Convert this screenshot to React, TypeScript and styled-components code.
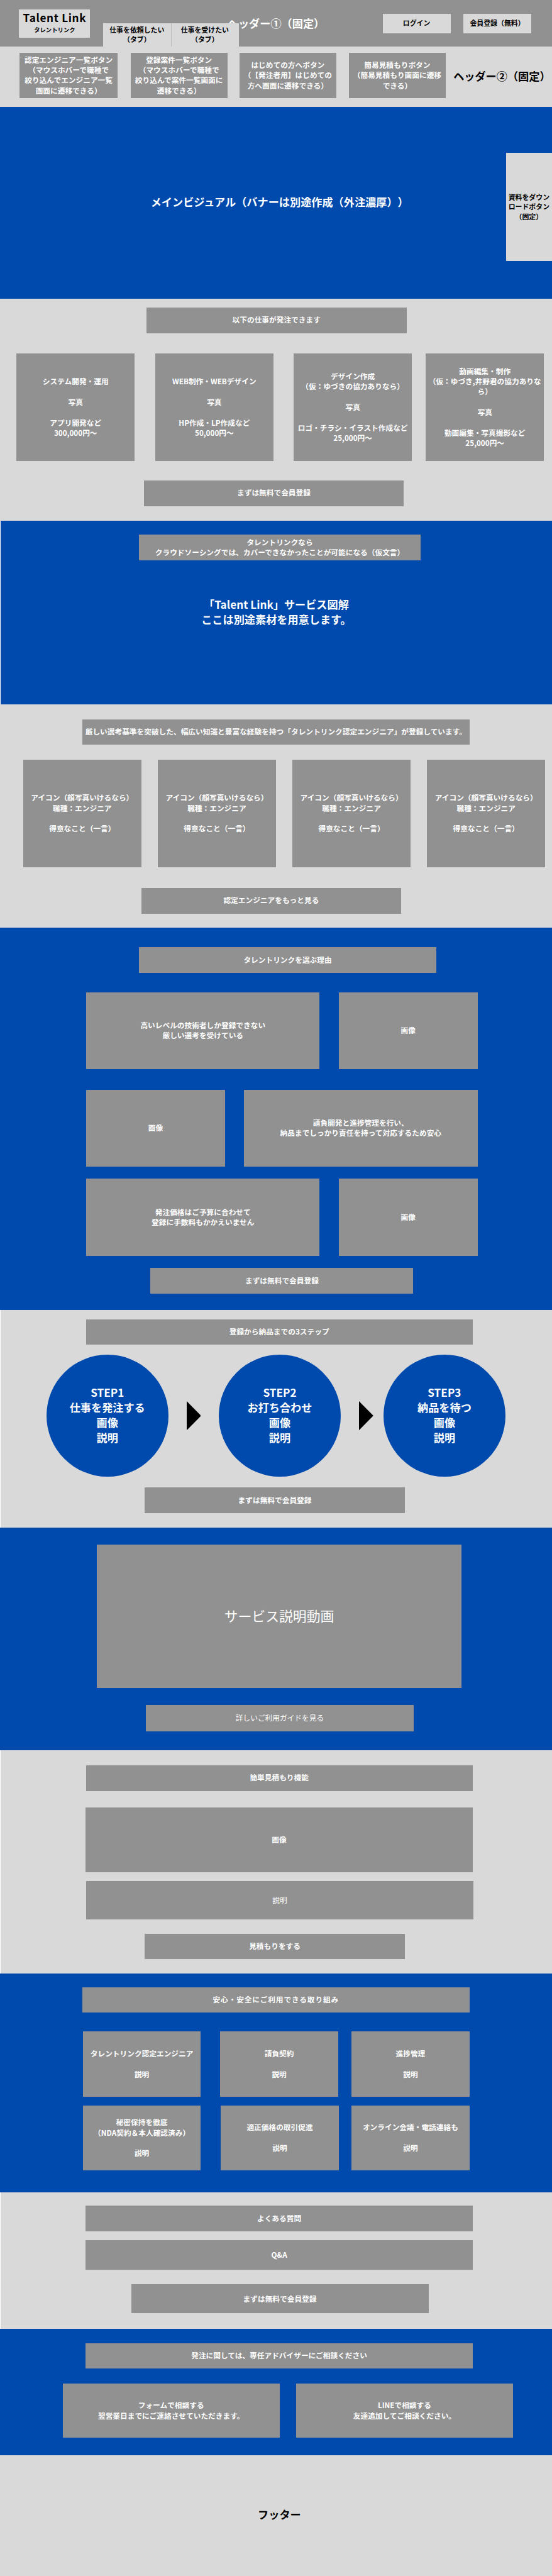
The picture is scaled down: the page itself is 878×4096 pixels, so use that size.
import React from 'react';
import styled, { createGlobalStyle, css } from 'styled-components';

/* The wireframe is laid out on a 1500-unit wide board. */
const u = (n: number) => `${(n * 0.58514).toFixed(3)}px`;

const BLUE = '#004aad';
const LIGHT = '#d9d9d9';
const GRAY = '#919191';

const GlobalStyle = createGlobalStyle`
  *, *::before, *::after { box-sizing: border-box; }
  html, body { margin: 0; padding: 0; background: #fff; }
  body {
    font-family: "Noto Sans CJK JP", "Noto Sans", sans-serif;
    font-weight: 700;
    text-spacing-trim: space-all;
    -webkit-font-smoothing: antialiased;
  }
`;

const Page = styled.div`
  width: 100%;
  overflow: hidden;
`;

const label = css`
  white-space: pre;
  text-align: center;
  font-size: ${u(20)};
  line-height: ${u(28)};
`;

const Section = styled.section<{ $tone: 'blue' | 'light'; $h: number; $edge?: boolean }>`
  display: flex;
  flex-direction: column;
  align-items: flex-start;
  position: relative;
  height: ${p => u(p.$h)};
  background: ${p => (p.$tone === 'blue' ? BLUE : LIGHT)};
  box-shadow: ${p => (p.$edge ? 'inset 1px 0 0 #fff' : 'none')};
`;

const Row = styled.div<{ $top: number; $left: number }>`
  display: flex;
  align-items: center;
  flex: none;
  margin-top: ${p => u(p.$top)};
  margin-left: ${p => u(p.$left)};
`;

const Panel = styled.div<{ $w: number; $h: number; $gap?: number; $thin?: boolean; $track?: number }>`
  ${label}
  display: flex;
  align-items: center;
  justify-content: center;
  flex: none;
  width: ${p => u(p.$w)};
  height: ${p => u(p.$h)};
  margin-left: ${p => u(p.$gap ?? 0)};
  padding-bottom: 1px;
  background: ${GRAY};
  color: #fff;
  font-weight: ${p => (p.$thin ? 400 : 700)};
  letter-spacing: ${p => u(p.$track ?? 0)};
`;

const VideoPanel = styled(Panel)`
  font-size: ${u(37.33)};
  line-height: ${u(52)};
  padding-bottom: 2px;
`;

const HeaderTop = styled.header`
  position: relative;
  display: flex;
  align-items: flex-start;
  height: ${u(127)};
  background: ${GRAY};
`;

const HeaderTitle = styled.div`
  position: absolute;
  inset: 0;
  display: flex;
  align-items: center;
  justify-content: center;
  padding-bottom: 2px;
  font-size: ${u(29.33)};
  color: #fff;
`;

const Logo = styled.div`
  display: flex;
  flex-direction: column;
  align-items: center;
  position: relative;
  width: ${u(193)};
  height: ${u(77.5)};
  margin: ${u(25)} 0 0 ${u(52)};
  padding-top: ${u(4.6)};
  background: ${LIGHT};
  color: #000;
`;

const LogoName = styled.div`
  font-size: ${u(29.33)};
  line-height: ${u(38)};
  letter-spacing: ${u(1.1)};
  white-space: nowrap;
`;

const LogoKana = styled.div`
  font-size: ${u(16)};
  line-height: ${u(26)};
  white-space: nowrap;
`;

const Tabs = styled.nav`
  display: flex;
  position: relative;
  margin: ${u(63.5)} 0 0 ${u(35)};
`;

const smallLabel = css`
  display: flex;
  align-items: center;
  justify-content: center;
  flex: none;
  background: ${LIGHT};
  color: #000;
  white-space: pre;
  text-align: center;
  font-size: ${u(18.67)};
  line-height: ${u(26)};
  padding-bottom: 1px;
`;

const Tab = styled.div`
  ${smallLabel}
  width: ${u(184.6)};
  height: ${u(63.5)};
  & + & { box-shadow: inset 1px 0 0 #bcbcbc; }
`;

const HeaderActions = styled.div`
  display: flex;
  position: relative;
  gap: ${u(35)};
  margin: ${u(37)} 0 0 ${u(391)};
`;

const ActionButton = styled.div`
  ${smallLabel}
  width: ${u(184.5)};
  height: ${u(53.5)};
`;

const HeaderBottomTitle = styled.div`
  margin-left: ${u(21)};
  padding-top: ${u(2)};
  font-size: ${u(29.33)};
  line-height: ${u(41)};
  white-space: nowrap;
  color: #000;
`;

const Banner = styled.div<{ $top: number; $center: number; $dark?: boolean }>`
  margin-top: ${p => u(p.$top)};
  width: ${p => u(p.$center * 2)};
  flex: none;
  text-align: center;
  white-space: pre;
  font-size: ${u(29.33)};
  line-height: ${u(41)};
  color: ${p => (p.$dark ? '#000' : '#fff')};
`;

const DownloadTab = styled.aside`
  ${smallLabel}
  position: absolute;
  right: 0;
  top: ${u(125.5)};
  width: ${u(125.3)};
  height: ${u(294)};
`;

const Circle = styled.div<{ $gap?: number }>`
  display: flex;
  align-items: center;
  justify-content: center;
  flex: none;
  width: ${u(331)};
  height: ${u(331.5)};
  margin-left: ${p => u(p.$gap ?? 0)};
  padding-bottom: 2px;
  border-radius: 50%;
  background: ${BLUE};
  color: #fff;
  white-space: pre;
  text-align: center;
  font-size: ${u(29.33)};
  line-height: ${u(41.2)};
`;

const ArrowIcon = styled.svg`
  display: block;
  flex: none;
  width: ${u(39)};
  height: ${u(79)};
  margin-left: ${u(49.7)};
`;

const Arrow = () => (
  <ArrowIcon viewBox="0 0 39 79" preserveAspectRatio="none">
    <polygon points="0,0 39,39.5 0,79" fill="#000" />
  </ArrowIcon>
);

const services = [
  { gap: 0, text: 'システム開発・運用\n\n写真\n\nアプリ開発など\n300,000円〜' },
  { gap: 56, text: 'WEB制作・WEBデザイン\n\n写真\n\nHP作成・LP作成など\n50,000円〜' },
  { gap: 55.5, text: 'デザイン作成\n（仮：ゆづきの協力ありなら）\n\n写真\n\nロゴ・チラシ・イラスト作成など\n25,000円〜' },
  { gap: 38, text: '動画編集・制作\n（仮：ゆづき,井野君の協力ありな\nら）\n\n写真\n\n動画編集・写真撮影など\n25,000円〜' },
];

const engineer = 'アイコン（顔写真いけるなら）\n職種：エンジニア\n\n得意なこと（一言）';

export default function App() {
  return (
    <Page>
      <GlobalStyle />

      <HeaderTop>
        <HeaderTitle>ヘッダー①（固定）</HeaderTitle>
        <Logo>
          <LogoName>Talent Link</LogoName>
          <LogoKana>タレントリンク</LogoKana>
        </Logo>
        <Tabs>
          <Tab>{'仕事を依頼したい\n（タブ）'}</Tab>
          <Tab>{'仕事を受けたい\n（タブ）'}</Tab>
        </Tabs>
        <HeaderActions>
          <ActionButton>ログイン</ActionButton>
          <ActionButton>会員登録（無料）</ActionButton>
        </HeaderActions>
      </HeaderTop>

      <Section $tone="light" $h={163.5}>
        <Row $top={16} $left={53.5}>
          <Panel $w={266} $h={124}>{'認定エンジニア一覧ボタン\n（マウスホバーで職種で\n絞り込んでエンジニア一覧\n画面に遷移できる）'}</Panel>
          <Panel $w={263} $h={124} $gap={35.5}>{'登録案件一覧ボタン\n（マウスホバーで職種で\n絞り込んで案件一覧画面に\n遷移できる）'}</Panel>
          <Panel $w={263} $h={124} $gap={33}>{'はじめての方へボタン\n（【発注者用】はじめての\n方へ画面に遷移できる）'}</Panel>
          <Panel $w={263} $h={124} $gap={34.5}>{'簡易見積もりボタン\n（簡易見積もり画面に遷移\nできる）'}</Panel>
          <HeaderBottomTitle>ヘッダー②（固定）</HeaderBottomTitle>
        </Row>
      </Section>

      <Section $tone="blue" $h={520.5}>
        <Banner $top={237} $center={760}>メインビジュアル（バナーは別途作成（外注濃厚））</Banner>
        <DownloadTab>{'資料をダウン\nロードボタン\n（固定）'}</DownloadTab>
      </Section>

      <Section $tone="light" $h={604.5}>
        <Row $top={24} $left={398}>
          <Panel $w={707} $h={70}>以下の仕事が発注できます</Panel>
        </Row>
        <Row $top={56} $left={45}>
          {services.map(s => (
            <Panel key={s.text} $w={321} $h={292} $gap={s.gap}>{s.text}</Panel>
          ))}
        </Row>
        <Row $top={52.5} $left={391}>
          <Panel $w={706.5} $h={69.5}>まずは無料で会員登録</Panel>
        </Row>
      </Section>

      <Section $tone="blue" $h={499} $edge>
        <Row $top={37.5} $left={377}>
          <Panel $w={767} $h={69.5}>{'タレントリンクなら\nクラウドソーシングでは、カバーできなかったことが可能になる（仮文言）'}</Panel>
        </Row>
        <Banner $top={100} $center={751}>{'「Talent Link」サービス図解\nここは別途素材を用意します。'}</Banner>
      </Section>

      <Section $tone="light" $h={606}>
        <Row $top={40.2} $left={224}>
          <Panel $w={1052} $h={69.5}>厳しい選考基準を突破した、幅広い知識と豊富な経験を持つ「タレントリンク認定エンジニア」が登録しています。</Panel>
        </Row>
        <Row $top={40.5} $left={63.3}>
          <Panel $w={320.5} $h={292}>{engineer}</Panel>
          <Panel $w={320.5} $h={292} $gap={45.5}>{engineer}</Panel>
          <Panel $w={320.5} $h={292} $gap={45.5}>{engineer}</Panel>
          <Panel $w={320.5} $h={292} $gap={45.5}>{engineer}</Panel>
        </Row>
        <Row $top={56} $left={384}>
          <Panel $w={706.5} $h={70}>認定エンジニアをもっと見る</Panel>
        </Row>
      </Section>

      <Section $tone="blue" $h={1039.5}>
        <Row $top={53.2} $left={378}>
          <Panel $w={808} $h={70}>タレントリンクを選ぶ理由</Panel>
        </Row>
        <Row $top={52.6} $left={234.4}>
          <Panel $w={634.4} $h={208.8}>{'高いレベルの技術者しか登録できない\n厳しい選考を受けている'}</Panel>
          <Panel $w={377} $h={208.8} $gap={52.3}>画像</Panel>
        </Row>
        <Row $top={56} $left={234.4}>
          <Panel $w={377} $h={208.8}>画像</Panel>
          <Panel $w={635} $h={208.8} $gap={51.7}>{'請負開発と進捗管理を行い、\n納品までしっかり責任を持って対応するため安心'}</Panel>
        </Row>
        <Row $top={33.3} $left={234.4}>
          <Panel $w={634.4} $h={209}>{'発注価格はご予算に合わせて\n登録に手数料もかかえいません'}</Panel>
          <Panel $w={377} $h={209} $gap={52.3}>画像</Panel>
        </Row>
        <Row $top={33} $left={409}>
          <Panel $w={714.6} $h={70}>まずは無料で会員登録</Panel>
        </Row>
      </Section>

      <Section $tone="light" $h={591} $edge>
        <Row $top={25} $left={233.4}>
          <Panel $w={1051.4} $h={69.5}>登録から納品までの3ステップ</Panel>
        </Row>
        <Row $top={27.3} $left={126.3}>
          <Circle>{'STEP1\n仕事を発注する\n画像\n説明'}</Circle>
          <Arrow />
          <Circle $gap={49}>{'STEP2\nお打ち合わせ\n画像\n説明'}</Circle>
          <Arrow />
          <Circle $gap={28}>{'STEP3\n納品を待つ\n画像\n説明'}</Circle>
        </Row>
        <Row $top={29.3} $left={393.7}>
          <Panel $w={706.5} $h={70}>まずは無料で会員登録</Panel>
        </Row>
      </Section>

      <Section $tone="blue" $h={605.5}>
        <Row $top={46} $left={263.6}>
          <VideoPanel $w={990.5} $h={390} $thin>サービス説明動画</VideoPanel>
        </Row>
        <Row $top={46} $left={397}>
          <Panel $w={727} $h={72} $thin>詳しいご利用ガイドを見る</Panel>
        </Row>
      </Section>

      <Section $tone="light" $h={606.5} $edge>
        <Row $top={40.5} $left={233.4}>
          <Panel $w={1051.4} $h={69.5}>簡単見積もり機能</Panel>
        </Row>
        <Row $top={46} $left={233.2}>
          <Panel $w={1051.4} $h={176}>画像</Panel>
        </Row>
        <Row $top={24} $left={234.7}>
          <Panel $w={1051.6} $h={104.3} $thin>説明</Panel>
        </Row>
        <Row $top={37.7} $left={393.7}>
          <Panel $w={706.5} $h={69.5}>見積もりをする</Panel>
        </Row>
      </Section>

      <Section $tone="blue" $h={594}>
        <Row $top={37} $left={224}>
          <Panel $w={1052} $h={69.5} $track={1.5}>安心・安全にご利用できる取り組み</Panel>
        </Row>
        <Row $top={51.3} $left={225.3}>
          <Panel $w={320.5} $h={176.7}>{'タレントリンク認定エンジニア\n\n説明'}</Panel>
          <Panel $w={320.5} $h={176.7} $gap={53}>{'請負契約\n\n説明'}</Panel>
          <Panel $w={320.5} $h={176.7} $gap={36.3}>{'進捗管理\n\n説明'}</Panel>
        </Row>
        <Row $top={24.3} $left={225.3}>
          <Panel $w={320.5} $h={176.4}>{'秘密保持を徹底\n（NDA契約＆本人確認済み）\n\n説明'}</Panel>
          <Panel $w={320.5} $h={176.4} $gap={54.5}>{'適正価格の取引促進\n\n説明'}</Panel>
          <Panel $w={320.5} $h={176.4} $gap={34.8}>{'オンライン会議・電話連絡も\n\n説明'}</Panel>
        </Row>
      </Section>

      <Section $tone="light" $h={371.7} $edge>
        <Row $top={37} $left={233.2}>
          <Panel $w={1051.4} $h={69.7}>よくある質問</Panel>
        </Row>
        <Row $top={24.4} $left={233.2}>
          <Panel $w={1051.4} $h={79}>Q&amp;A</Panel>
        </Row>
        <Row $top={40.3} $left={356.4}>
          <Panel $w={808.3} $h={79}>まずは無料で会員登録</Panel>
        </Row>
      </Section>

      <Section $tone="blue" $h={343.3}>
        <Row $top={38.5} $left={233.2}>
          <Panel $w={1051.4} $h={69.3}>発注に関しては、専任アドバイザーにご相談ください</Panel>
        </Row>
        <Row $top={40.3} $left={170.3}>
          <Panel $w={589.7} $h={148.2}>{'フォームで相談する\n翌営業日までにご連絡させていただきます。'}</Panel>
          <Panel $w={590.3} $h={148.2} $gap={44.5}>{'LINEで相談する\n友達追加してご相談ください。'}</Panel>
        </Row>
      </Section>

      <Section as="footer" $tone="light" $h={328}>
        <Banner $top={141} $center={759.5} $dark>フッター</Banner>
      </Section>
    </Page>
  );
}
